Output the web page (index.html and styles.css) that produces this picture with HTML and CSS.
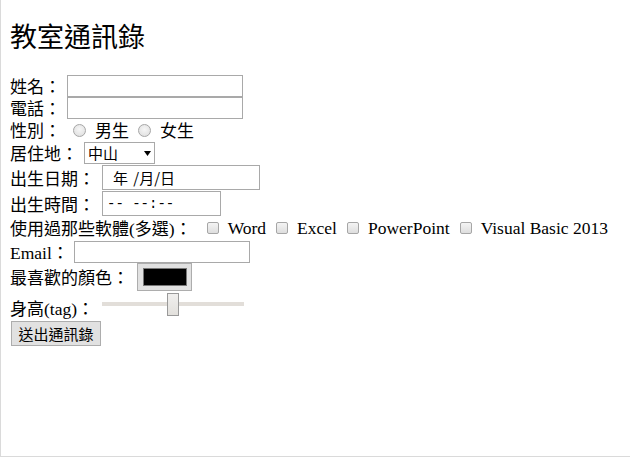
FILE: index.html
```html
<!DOCTYPE html>
<html lang="zh-Hant">
<head>
<meta charset="utf-8">
<title>教室通訊錄</title>
<link rel="stylesheet" href="styles.css">
</head>
<body>
<div class="frame">
  <h1 class="title">教室通訊錄</h1>
  <form class="form">
    <div class="row r-text"><span class="lbl">姓名：</span><input class="field w-name" type="text"></div>
    <div class="row r-text2"><span class="lbl">電話：</span><input class="field w-name" type="text"></div>
    <div class="row r-radio"><span class="lbl">性別：</span>
      <input class="radio" type="radio" name="sex"><span class="opt">男生</span>
      <input class="radio" type="radio" name="sex"><span class="opt">女生</span>
    </div>
    <div class="row r-select"><span class="lbl">居住地：</span>
      <span class="select"><span class="sel-text">中山</span><svg class="sel-arrow" width="7" height="5" viewBox="0 0 7 5"><polygon points="0,0 7,0 3.5,5" fill="#000"/></svg></span>
    </div>
    <div class="row r-date"><span class="lbl">出生日期：</span><span class="field tall w-date"><span class="date-text">年 /月/日</span></span></div>
    <div class="row r-time"><span class="lbl">出生時間：</span><span class="field tall w-time"><span class="time-text">-- --:--</span></span></div>
    <div class="row r-check"><span class="lbl">使用過那些軟體<span class="en">(</span>多選<span class="en">)</span>：</span>
      <input class="check" type="checkbox"><span class="copt en">Word</span>
      <input class="check" type="checkbox"><span class="copt en">Excel</span>
      <input class="check" type="checkbox"><span class="copt en">PowerPoint</span>
      <input class="check" type="checkbox"><span class="copt en">Visual Basic 2013</span>
    </div>
    <div class="row r-email"><span class="lbl"><span class="en">Email</span>：</span><input class="field w-email" type="text"></div>
    <div class="row r-color"><span class="lbl">最喜歡的顏色：</span><span class="color-btn"><span class="swatch"></span></span></div>
    <div class="row r-range"><span class="lbl lbl-low">身高<span class="en">(tag)</span>：</span><span class="range"><span class="track"></span><span class="thumb"></span></span></div>
    <div class="row r-submit"><button class="submit" type="button">送出通訊錄</button></div>
  </form>
</div>
</body>
</html>
```
FILE: styles.css
```css
html, body {
  margin: 0;
  padding: 0;
  background: #fff;
}
.frame {
  box-sizing: border-box;
  width: 630px;
  height: 457px;
  border-left: 1px solid #dadada;
  border-bottom: 1px solid #dadada;
  padding: 0 0 0 9px;
  font-family: "Noto Sans CJK TC", sans-serif;
  font-size: 17px;
  color: #000;
}
.en {
  font-family: "Liberation Serif", serif;
  font-size: 17.5px;
}
.title {
  margin: 0;
  padding-top: 18px;
  height: 38px;
  line-height: 36px;
  font-family: "Noto Sans CJK TC", sans-serif;
  font-size: 27px;
  font-weight: normal;
}
.form {
  margin-top: 19px;
}
.row {
  display: flex;
  align-items: center;
  white-space: nowrap;
  line-height: 20px;
}
.lbl {
  margin-right: 6px;
}
.r-text { height: 22px; }
.r-text2 { height: 22px; }
.r-radio { height: 22px; }
.r-select { height: 22px; margin-top: 1px; }
.r-date { height: 25px; margin-top: 1px; }
.r-time { height: 25px; margin-top: 1px; }
.r-check { height: 22px; margin-top: 1px; }
.r-email { height: 22px; margin-top: 2px; }
.r-color { height: 28px; margin-top: 0; }
.r-range { height: 28px; margin-top: 2px; align-items: flex-end; }
.r-submit { height: 25px; margin-top: 0; }

.field {
  box-sizing: border-box;
  height: 22px;
  border: 1px solid #a9a9a9;
  padding: 0 4px;
  margin: 0;
  font: inherit;
  background: #fff;
  display: inline-flex;
  align-items: center;
}
.field.tall { height: 25px; }
.w-name { width: 176px; }
.w-email { width: 176px; margin-left: -1px; }
.w-date { width: 158px; margin-left: 1px; }
.w-time { width: 119px; margin-left: 1px; }
.date-text {
  font-size: 15px;
  padding-left: 6px;
  word-spacing: 2px;
}
.time-text {
  font-family: "Liberation Mono", monospace;
  font-size: 14px;
  white-space: pre;
}

.radio {
  appearance: none;
  -webkit-appearance: none;
  box-sizing: border-box;
  width: 13px;
  height: 13px;
  border-radius: 50%;
  border: 1px solid #a6a6a6;
  background: radial-gradient(circle at 50% 40%, #f6f6f6, #dcdcdc);
  margin: 0 9px 0 6px;
}
.opt {
  margin-right: 3px;
}
.select {
  box-sizing: border-box;
  display: inline-flex;
  align-items: center;
  justify-content: space-between;
  width: 71px;
  height: 22px;
  border: 1px solid #a9a9a9;
  padding: 0 3px 0 3px;
  margin-left: 0;
  font-size: 15px;
}
.sel-arrow {
  display: block;
  margin-top: 1px;
}

.check {
  appearance: none;
  -webkit-appearance: none;
  box-sizing: border-box;
  width: 12px;
  height: 12px;
  border: 1px solid #a6a6a6;
  border-radius: 2px;
  background: linear-gradient(#f4f4f4, #dedede);
  margin: 0 9px 0 9px;
}
.copt { margin-right: 1px; }

.color-btn {
  box-sizing: border-box;
  display: inline-flex;
  align-items: center;
  justify-content: center;
  width: 55px;
  height: 28px;
  border: 1px solid #adadad;
  background: #e1e1e1;
  margin-left: 2px;
}
.swatch {
  display: block;
  width: 42px;
  height: 16px;
  background: #000;
  border: 1px solid #777;
}

.lbl-low { line-height: 24px; }
.range {
  position: relative;
  display: inline-block;
  width: 142px;
  height: 24px;
  margin-left: 2px;
  align-self: flex-start;
}
.track {
  position: absolute;
  left: 0;
  right: 0;
  top: 9px;
  height: 4px;
  background: #e2ded9;
}
.thumb {
  position: absolute;
  left: 65px;
  top: 0;
  box-sizing: border-box;
  width: 12px;
  height: 23px;
  border: 1px solid #999;
  background: linear-gradient(#f0efee, #e2e0dc);
}

.submit {
  box-sizing: border-box;
  height: 25px;
  width: 90px;
  margin: 0 0 0 1px;
  padding: 0;
  border: 1px solid #adadad;
  background: #e1e1e1;
  font-family: "Noto Sans CJK TC", sans-serif;
  font-size: 15px;
  color: #000;
}
```
